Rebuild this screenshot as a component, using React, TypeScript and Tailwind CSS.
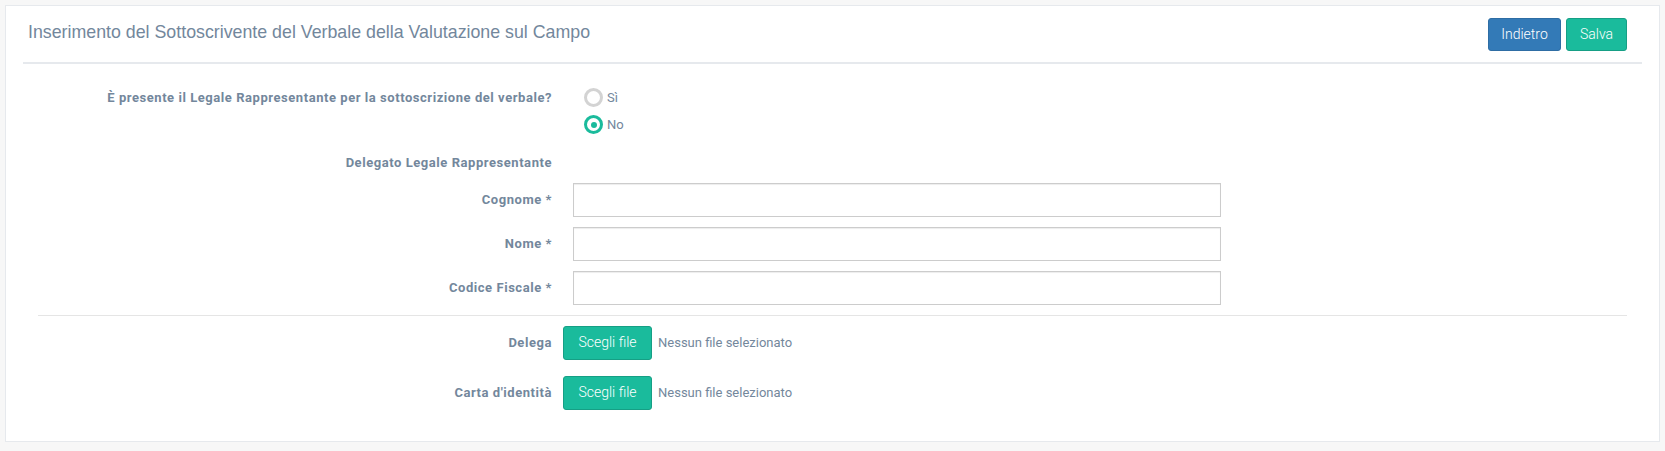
import { FC } from "react";

const labelCls =
  "w-[529px] shrink-0 text-right text-[13px] font-bold tracking-[0.55px] text-[#73879c]";

const Radio: FC<{ checked?: boolean; label: string }> = ({ checked, label }) => (
  <div className="flex items-center h-[27px]">
    <span
      className={
        checked
          ? "flex items-center justify-center w-[19px] h-[19px] rounded-full border-[3px] border-[#1abb9c] bg-white"
          : "flex items-center justify-center w-[19px] h-[19px] rounded-full border-[3px] border-[#d3d3d3] bg-white"
      }
    >
      {checked && <span className="w-[6px] h-[6px] rounded-full bg-[#1abb9c]"></span>}
    </span>
    <span className="ml-[4px] text-[13px] text-[#73879c]">{label}</span>
  </div>
);

const TextRow: FC<{ label: string }> = ({ label }) => (
  <div className="flex items-center h-[34px]">
    <label className={labelCls}>{label}</label>
    <input
      type="text"
      className="ml-[21px] w-[648px] h-[34px] border border-[#ccc] bg-white shadow-[inset_0_1px_1px_rgba(0,0,0,0.075)] outline-none"
    />
  </div>
);

const FileRow: FC<{ label: string }> = ({ label }) => (
  <div className="flex items-center h-[34px]">
    <label className={labelCls}>{label}</label>
    <button className="ml-[11px] w-[89px] h-[34px] rounded-[3px] border border-[#169f85] bg-[#1abb9c] text-[14px] font-light text-white">
      Scegli file
    </button>
    <span className="ml-[6px] text-[13px] text-[#73879c]">Nessun file selezionato</span>
  </div>
);

export default function App() {
  return (
    <div
      className="min-h-screen bg-[#f7f7f7] p-[5px]"
      style={{ fontFamily: "Roboto, 'Liberation Sans', sans-serif" }}
    >
      <div className="border border-[#e6e9ed] bg-white px-[17px] pt-[10px] h-[437px]">
        {/* header */}
        <div className="flex items-start justify-between h-[48px] border-b-2 border-[#e6e9ed]">
          <h2
            className="mt-[5px] pl-[5px] text-[17.8px] leading-[22px] text-[#73879c]"
            style={{ fontFamily: "'Liberation Sans', Arial, sans-serif" }}
          >
            Inserimento del Sottoscrivente del Verbale della Valutazione sul Campo
          </h2>
          <div className="flex gap-[5px] mt-[2px] mr-[15px]">
            <button className="w-[73px] h-[33px] rounded-[3px] border border-[#2e6da4] bg-[#337ab7] text-[14px] font-light text-white">
              Indietro
            </button>
            <button className="w-[61px] h-[33px] rounded-[3px] border border-[#169f85] bg-[#1abb9c] text-[14px] font-light text-white">
              Salva
            </button>
          </div>
        </div>

        {/* question */}
        <div className="flex mt-[20px]">
          <label className={labelCls + " pt-[4px]"}>
            È presente il Legale Rappresentante per la sottoscrizione del verbale?
          </label>
          <div className="ml-[32px] flex flex-col">
            <Radio label="Sì" />
            <Radio checked label="No" />
          </div>
        </div>

        <div className="flex mt-[15px]">
          <span className={labelCls}>Delegato Legale Rappresentante</span>
        </div>

        <div className="flex flex-col gap-[10px] mt-[10px]">
          <TextRow label="Cognome *" />
          <TextRow label="Nome *" />
          <TextRow label="Codice Fiscale *" />
        </div>

        <div className="mx-[15px] mt-[10px] border-t border-[#e5e5e5]"></div>

        <div className="flex flex-col gap-[16px] mt-[10px]">
          <FileRow label="Delega" />
          <FileRow label="Carta d'identità" />
        </div>
      </div>
    </div>
  );
}
